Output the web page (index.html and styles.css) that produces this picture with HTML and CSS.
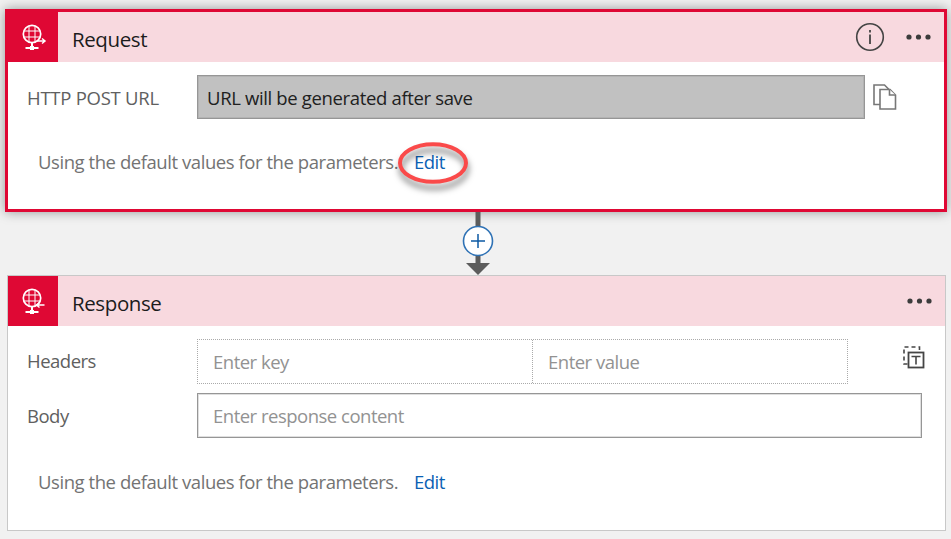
FILE: index.html
```html
<!DOCTYPE html>
<html lang="en">
<head>
<meta charset="utf-8">
<title>Logic app designer</title>
<link rel="stylesheet" href="styles.css">
</head>
<body>
<main class="designer">
  <section class="card card-selected">
    <header class="card-header">
      <div class="card-icon">
        <svg width="50" height="50" viewBox="0 0 50 50" fill="none" stroke="#fff" stroke-width="1">
          <circle cx="24" cy="22" r="8.700" stroke-width="1.700"/><path d="M21 14v16M27 14v16M16 19h16M16 25h16"/><path d="M24 31v4M17.500 36h13" stroke-width="2"/><path d="M22 36h4" stroke-width="4"/><path d="M29 29h8M34 26.500l3 2.500-3 2.500" stroke-width="1.500"/>
        </svg>
      </div>
      <h2 class="title">Request</h2>
      <svg class="info" width="30" height="30" viewBox="0 0 30 30"><circle cx="15" cy="15" r="13.300" fill="none" stroke="#444" stroke-width="1.600"/><path d="M15 12.500v9.500M15 8v2.500" stroke="#444" stroke-width="1.800"/></svg>
      <svg class="dots" width="26" height="6" viewBox="0 0 26 6" fill="#3c3c3c"><circle cx="3" cy="3" r="2.600"/><circle cx="12.500" cy="3" r="2.600"/><circle cx="22" cy="3" r="2.600"/></svg>
    </header>
    <div class="row row-url">
      <label class="label label-caps">HTTP POST URL</label>
      <div class="field field-url">URL will be generated after save</div>
      <svg class="copy" width="24" height="26" viewBox="0 0 24 26" fill="#fff" stroke="#777" stroke-width="1.600"><path d="M7 20.500H1V1h10.500l5 5"/><path d="M7 5.500h10l5.500 5.500v14H7z"/><path d="M16.500 5.500v5.500h6"/></svg>
    </div>
    <div class="note"><span class="note-text">Using the default values for the parameters.</span>
      <a class="edit">Edit
        <svg class="ring" width="76" height="56" viewBox="0 0 76 56"><ellipse cx="36" cy="23" rx="33" ry="18.800" fill="none" stroke="#fa4a4a" stroke-width="4"/></svg>
      </a>
    </div>
  </section>
  <div class="connector">
    <svg width="36" height="63" viewBox="0 0 36 63"><path d="M18 0v54" stroke="#5c5c5c" stroke-width="5"/><path d="M6 51h24L18 63z" fill="#5c5c5c"/><circle cx="18" cy="29" r="14.500" fill="#fff" stroke="#2f72b5" stroke-width="1.600"/><path d="M11 29h14M18 22v14" stroke="#0c59a4" stroke-width="1.500"/></svg>
  </div>
  <section class="card card-response">
    <header class="card-header">
      <div class="card-icon">
        <svg width="50" height="50" viewBox="0 0 50 50" fill="none" stroke="#fff" stroke-width="1">
          <circle cx="24" cy="22" r="8.700" stroke-width="1.700"/><path d="M21 14v16M27 14v16M16 19h16M16 25h16"/><path d="M24 31v4M17.500 36h13" stroke-width="2"/><path d="M22 36h4" stroke-width="4"/><path d="M28.500 29h8M31.500 26.500l-3 2.500 3 2.500" stroke-width="1.500"/>
        </svg>
      </div>
      <h2 class="title">Response</h2>
      <svg class="dots" width="26" height="6" viewBox="0 0 26 6" fill="#3c3c3c"><circle cx="3" cy="3" r="2.600"/><circle cx="12.500" cy="3" r="2.600"/><circle cx="22" cy="3" r="2.600"/></svg>
    </header>
    <div class="row row-headers">
      <label class="label label-headers">Headers</label>
      <div class="pair">
        <div class="cell cell-key">Enter key</div>
        <div class="cell cell-value">Enter value</div>
      </div>
      <svg class="mode" width="22" height="24" viewBox="0 0 22 24" fill="none" stroke="#454545"><path d="M4.500 18H1V1h15.500v4" stroke-width="1.600" stroke-dasharray="4 3"/><rect x="5.500" y="6.500" width="15" height="15" fill="#fff" stroke-width="1.800"/><path d="M8.500 10.500h9M13 10.500v8" stroke-width="1.600"/></svg>
    </div>
    <div class="row row-body">
      <label class="label">Body</label>
      <div class="field field-body">Enter response content</div>
    </div>
    <div class="note note-response"><span class="note-text">Using the default values for the parameters.</span>
      <a class="edit">Edit</a>
    </div>
  </section>
</main>
</body>
</html>
```

FILE: styles.css
```css
* { box-sizing: border-box; }
body {
  margin: 0;
  height: 539px;
  overflow: hidden;
  background: #f1f1f1;
  font: 18.5px/26px "Open Sans", "Noto Sans", sans-serif;
  letter-spacing: -0.5px;
  white-space: nowrap;
  color: #606060;
}
svg { display: block; flex: none; }
.designer { padding: 9px 4px 0 5px; }
.card { background: #fff; }
.card-selected {
  height: 203px;
  border: 3px solid #df0834;
  box-shadow: 0 0 11px rgba(0, 0, 0, .38);
}
.card-response {
  height: 256px;
  margin: 0 1px 0 2px;
  border: 1px solid #c8c8c8;
}
.card-header {
  display: flex;
  align-items: center;
  height: 50px;
  background: #f8d9df;
}
.card-icon { width: 50px; height: 50px; background: #df0834; }
.title {
  flex: 1;
  margin: 4px 0 0 14px;
  font-size: 20.5px;
  font-weight: 400;
  letter-spacing: -0.4px;
  color: #1c1c1c;
}
.info { margin-right: 21px; }
.dots { margin-right: 12px; }
.row { display: flex; align-items: center; padding-left: 19px; }
.row-url { height: 44px; margin-top: 13px; }
.label { width: 170px; }
.label-caps { padding-top: 2px; letter-spacing: -0.25px; }
.label-headers { padding-bottom: 2px; }
.field {
  display: flex;
  align-items: center;
  border: 1px solid #969696;
  box-shadow: inset 0 0 0 1px rgba(150, 150, 150, .3);
}
.field-url {
  width: 668px;
  height: 44px;
  padding: 2px 0 0 9px;
  background: #c1c1c1;
  color: #202020;
  letter-spacing: -0.35px;
}
.copy { margin-left: 8px; }
.note { display: flex; align-items: center; height: 26px; margin: 30px 0 0 30px; color: #737373; }
.note-text { width: 376px; letter-spacing: -0.44px; }
.edit { position: relative; color: #0b61b4; }
.ring {
  position: absolute;
  left: -17px;
  top: -9px;
  filter: drop-shadow(1px 6px 3px rgba(0, 0, 0, .5));
}
.connector { display: flex; justify-content: center; height: 63px; padding-left: 4px; }
.row-headers { height: 45px; margin-top: 13px; }
.pair {
  display: flex;
  width: 651px;
  height: 45px;
  border: 1px dotted #aaa;
  color: #929292;
}
.cell { display: flex; align-items: center; padding-left: 15px; }
.cell-key { width: 335px; border-right: 1px dotted #aaa; }
.mode { margin: 0 0 8px 55px; }
.row-body { height: 45px; margin-top: 9px; }
.field-body { width: 725px; height: 45px; padding-left: 15px; color: #929292; }
.note-response { margin-top: 31px; }
```
